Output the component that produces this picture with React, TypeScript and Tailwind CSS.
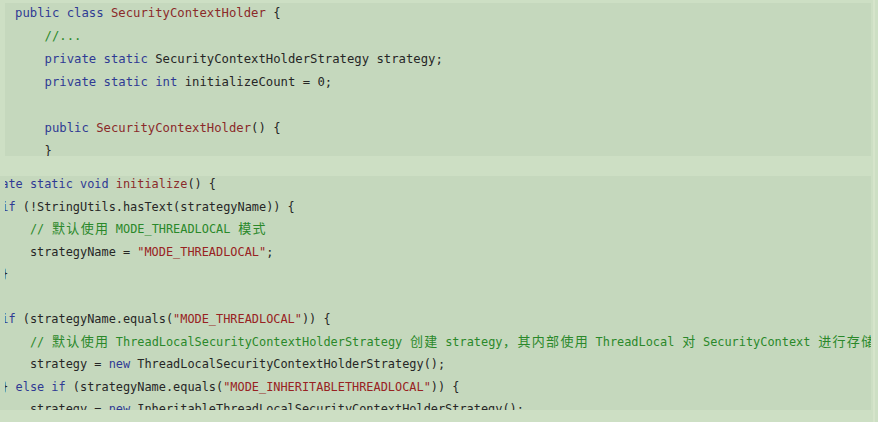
import React from "react";

type Tok = [string, string];

const colorOf: Record<string, string> = {
  k: "text-[#2f3a94]",
  t: "text-[#8b2a2a]",
  s: "text-[#982222]",
  c: "text-[#2a882a]",
  p: "text-[#262626]",
};

const isCJK = (ch: string) => /[\u3000-\u9fff\uff00-\uffef]/.test(ch);

function Rich({ text, wide }: { text: string; wide: string }) {
  const out: React.ReactNode[] = [];
  let buf = "";
  let key = 0;
  for (const ch of Array.from(text)) {
    if (isCJK(ch)) {
      if (buf) {
        out.push(<span key={key++}>{buf}</span>);
        buf = "";
      }
      out.push(
        <span
          key={key++}
          className={
            wide === "a"
              ? "inline-block w-[14.76px] text-center text-[13.4px]"
              : "inline-block w-[14.33px] text-center text-[13px]"
          }
        >
          {ch}
        </span>
      );
    } else buf += ch;
  }
  if (buf) out.push(<span key={key++}>{buf}</span>);
  return <>{out}</>;
}

function Line({ toks, wide }: { toks: Tok[]; wide: string }) {
  return (
    <div className="whitespace-pre">
      {toks.length === 0 ? " " : null}
      {toks.map(([t, s], i) => (
        <span key={i} className={colorOf[t]}>
          <Rich text={s} wide={wide} />
        </span>
      ))}
    </div>
  );
}

const block1: Tok[][] = [
  [["k", "public class "], ["t", "SecurityContextHolder"], ["p", " {"]],
  [["p", "    "], ["c", "//..."]],
  [["p", "    "], ["k", "private static "], ["p", "SecurityContextHolderStrategy strategy;"]],
  [["p", "    "], ["k", "private static int "], ["p", "initializeCount = 0;"]],
  [],
  [["p", "    "], ["k", "public "], ["t", "SecurityContextHolder"], ["p", "() {"]],
  [["p", "    }"]],
];

const block2: Tok[][] = [
  [["k", "private static void "], ["t", "initialize"], ["p", "() {"]],
  [["p", "    "], ["k", "if"], ["p", " (!StringUtils.hasText(strategyName)) {"]],
  [["p", "        "], ["c", "// 默认使用 MODE_THREADLOCAL 模式"]],
  [["p", "        strategyName = "], ["s", "\"MODE_THREADLOCAL\""], ["p", ";"]],
  [["p", "    }"]],
  [],
  [["p", "    "], ["k", "if"], ["p", " (strategyName.equals("], ["s", "\"MODE_THREADLOCAL\""], ["p", ")) {"]],
  [
    ["p", "        "],
    ["c", "// 默认使用 ThreadLocalSecurityContextHolderStrategy 创建 strategy，其内部使用 ThreadLocal 对 SecurityContext 进行存储"],
  ],
  [["p", "        strategy = "], ["k", "new"], ["p", " ThreadLocalSecurityContextHolderStrategy();"]],
  [
    ["p", "    } "],
    ["k", "else if"],
    ["p", " (strategyName.equals("],
    ["s", "\"MODE_INHERITABLETHREADLOCAL\""],
    ["p", ")) {"],
  ],
  [["p", "        strategy = "], ["k", "new"], ["p", " InheritableThreadLocalSecurityContextHolderStrategy();"]],
  [["p", "    }"]],
];

export default function App() {
  return (
    <div className="flex h-[422px] w-[878px] overflow-hidden bg-[#cddfc4] [font-family:'DejaVu_Sans_Mono','Noto_Sans_CJK_SC',monospace]">
      <div className="flex w-[871px] flex-col pt-[3px]">
        <div className="ml-[5px] h-[153px] overflow-hidden bg-[#c5d8bd] pl-[10px]">
          <div className="mt-[-1.5px] text-[12.26px] leading-[23px]">
            {block1.map((l, i) => (
              <Line key={i} toks={l} wide="a" />
            ))}
          </div>
        </div>
        <div className="mt-[20px] h-[234px] bg-[#c5d8bd]">
          <div className="ml-[5px] h-full overflow-hidden">
            <div className="ml-[-32.4px] mt-[-3px] text-[11.9px] leading-[22.55px]">
              {block2.map((l, i) => (
                <Line key={i} toks={l} wide="b" />
              ))}
            </div>
          </div>
        </div>
      </div>
      <div className="ml-[2px] w-[2px] bg-[#d6e4cb]" />
    </div>
  );
}
